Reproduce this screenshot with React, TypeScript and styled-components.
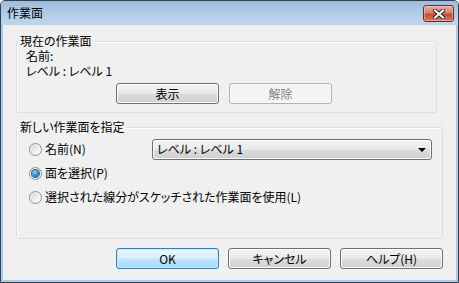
import styled, { createGlobalStyle, css } from "styled-components";

const uiFont = `"Noto Sans CJK JP", "Liberation Sans", sans-serif`;

const GlobalStyle = createGlobalStyle`
  html, body {
    margin: 0;
    padding: 0;
    background: #ffffff;
  }
  body {
    font-family: ${uiFont};
    font-size: 12px;
    color: #000;
  }
  * {
    box-sizing: border-box;
  }
`;

const Window = styled.div`
  width: 459px;
  height: 283px;
  border: 1px solid #33414f;
  border-radius: 5px 5px 0 0;
  background: #aacbea;
  display: flex;
  flex-direction: column;
  overflow: hidden;
`;

const TitleBar = styled.div`
  height: 24px;
  flex: none;
  display: flex;
  align-items: flex-start;
  padding-left: 6px;
  background: linear-gradient(#9fbbdc, #b6cfe8 60%, #bed5ec);
`;

const Title = styled.span`
  margin-top: 5px;
  font-size: 12px;
  line-height: 14px;
  font-feature-settings: "palt";
`;

const CloseButton = styled.div`
  margin: 4px 4px 0 auto;
  width: 31px;
  height: 17px;
  border: 1px solid #6b2a22;
  border-radius: 3px;
  background: linear-gradient(#e7ab9c, #d7806c 45%, #c24c36 55%, #d57a5d);
  box-shadow: inset 0 0 0 1px rgba(255, 255, 255, 0.35);
  display: flex;
  align-items: center;
  justify-content: center;
`;

const Client = styled.div`
  flex: 1;
  margin: 0 2px 2px;
  background: #f0f0f0;
  padding: 9px 13px 11px 13px;
  display: flex;
  flex-direction: column;
  align-items: flex-start;
`;

const Group = styled.fieldset<{ $width: number; $height: number; $gapTop?: number }>`
  margin: ${(p) => p.$gapTop ?? 0}px 0 0;
  padding: 0;
  width: ${(p) => p.$width}px;
  height: ${(p) => p.$height}px;
  border: 1px solid #d5dfe5;
  border-radius: 3px;
  box-shadow: inset 1px 1px 0 #ffffff;
  min-inline-size: 0;
`;

const Legend = styled.legend`
  margin-left: 2px;
  padding: 0 2px 0 1px;
  font-size: 12px;
  line-height: 14px;
  font-feature-settings: "palt";
`;

const InfoBody = styled.div`
  padding: 0 0 0 9px;
`;

const InfoLine = styled.div`
  height: 15px;
  font-size: 12px;
  line-height: 15px;
  font-feature-settings: "palt";
`;

const GroupButtons = styled.div`
  display: flex;
  gap: 10px;
  margin: 5px 0 0 99px;
`;

const buttonBase = css`
  width: 103px;
  height: 21px;
  border-radius: 3px;
  font-family: ${uiFont};
  font-size: 12px;
  line-height: 19px;
  text-align: center;
  padding: 0;
  font-feature-settings: "palt";
`;

const Button = styled.button<{ $primary?: boolean }>`
  ${buttonBase}
  color: #000;
  border: 1px solid #707070;
  background: linear-gradient(#f2f2f2, #ebebeb 48%, #dddddd 52%, #cfcfcf);
  box-shadow: inset 0 0 0 1px #fcfcfc;
  ${(p) =>
    p.$primary &&
    css`
      border-color: #3c7fb1;
      background: linear-gradient(#eaf6fd, #d9f0fc 48%, #bee6fd 52%, #a7d9f5);
      box-shadow: inset 0 0 0 1px #c8e9fc;
    `}
  &:disabled {
    color: #838383;
    border-color: #adb2b5;
    background: #f4f4f4;
    box-shadow: inset 0 0 0 1px #fbfbfb;
  }
`;

const ChoiceBody = styled.div`
  padding: 3px 10px 0 12px;
`;

const ChoiceRow = styled.div`
  height: 24px;
  display: flex;
  align-items: center;
`;

const Radio = styled.span<{ $checked?: boolean }>`
  width: 13px;
  height: 13px;
  flex: none;
  border-radius: 50%;
  border: 1px solid #8c8e90;
  background: linear-gradient(135deg, #d4d4d4, #f4f4f4 70%, #ffffff);
  box-shadow: inset 0 0 0 1px #f6f6f6;
  display: flex;
  align-items: center;
  justify-content: center;
  &::after {
    content: "";
    display: ${(p) => (p.$checked ? "block" : "none")};
    width: 7px;
    height: 7px;
    border-radius: 50%;
    background: radial-gradient(circle at 40% 35%, #8fd4fa, #2a86cf 55%, #0f4b8e);
    box-shadow: 0 0 0 1px #2f5f8f;
  }
`;

const ChoiceLabel = styled.span`
  margin-left: 3px;
  font-size: 12px;
  line-height: 14px;
  font-feature-settings: "palt";
`;

const Combo = styled.div`
  margin-left: auto;
  width: 280px;
  height: 21px;
  border: 1px solid #707070;
  border-radius: 3px;
  background: linear-gradient(#f2f2f2, #ebebeb 48%, #dddddd 52%, #cfcfcf);
  box-shadow: inset 0 0 0 1px #fcfcfc;
  display: flex;
  align-items: center;
  padding: 0 5px 0 4px;
  font-size: 12px;
  line-height: 14px;
  font-feature-settings: "palt";
`;

const ComboArrow = styled.span`
  margin-left: auto;
  width: 0;
  height: 0;
  border-left: 4px solid transparent;
  border-right: 4px solid transparent;
  border-top: 4px solid #000;
  margin-top: 1px;
`;

const Footer = styled.div`
  align-self: stretch;
  display: flex;
  justify-content: flex-end;
  gap: 9px;
  margin-top: 9px;
`;

function CloseGlyph() {
  return (
    <svg width="12" height="10" viewBox="0 0 12 10">
      <path
        d="M2 1.5 L10 8.5 M10 1.5 L2 8.5"
        stroke="#3b2420"
        strokeWidth="4"
        strokeLinecap="square"
      />
      <path
        d="M2 1.5 L10 8.5 M10 1.5 L2 8.5"
        stroke="#ffffff"
        strokeWidth="2"
        strokeLinecap="square"
      />
    </svg>
  );
}

export default function App() {
  return (
    <>
      <GlobalStyle />
      <Window>
        <TitleBar>
          <Title>作業面</Title>
          <CloseButton>
            <CloseGlyph />
          </CloseButton>
        </TitleBar>
        <Client>
          <Group $width={421} $height={79}>
            <Legend>現在の作業面</Legend>
            <InfoBody>
              <InfoLine>名前:</InfoLine>
              <InfoLine>レベル : レベル 1</InfoLine>
            </InfoBody>
            <GroupButtons>
              <Button>表示</Button>
              <Button disabled>解除</Button>
            </GroupButtons>
          </Group>
          <Group $width={427} $height={119} $gapTop={7}>
            <Legend>新しい作業面を指定</Legend>
            <ChoiceBody>
              <ChoiceRow>
                <Radio />
                <ChoiceLabel>名前(N)</ChoiceLabel>
                <Combo>
                  レベル : レベル 1
                  <ComboArrow />
                </Combo>
              </ChoiceRow>
              <ChoiceRow>
                <Radio $checked />
                <ChoiceLabel>面を選択(P)</ChoiceLabel>
              </ChoiceRow>
              <ChoiceRow>
                <Radio />
                <ChoiceLabel>選択された線分がスケッチされた作業面を使用(L)</ChoiceLabel>
              </ChoiceRow>
            </ChoiceBody>
          </Group>
          <Footer>
            <Button $primary>OK</Button>
            <Button>キャンセル</Button>
            <Button>ヘルプ(H)</Button>
          </Footer>
        </Client>
      </Window>
    </>
  );
}
